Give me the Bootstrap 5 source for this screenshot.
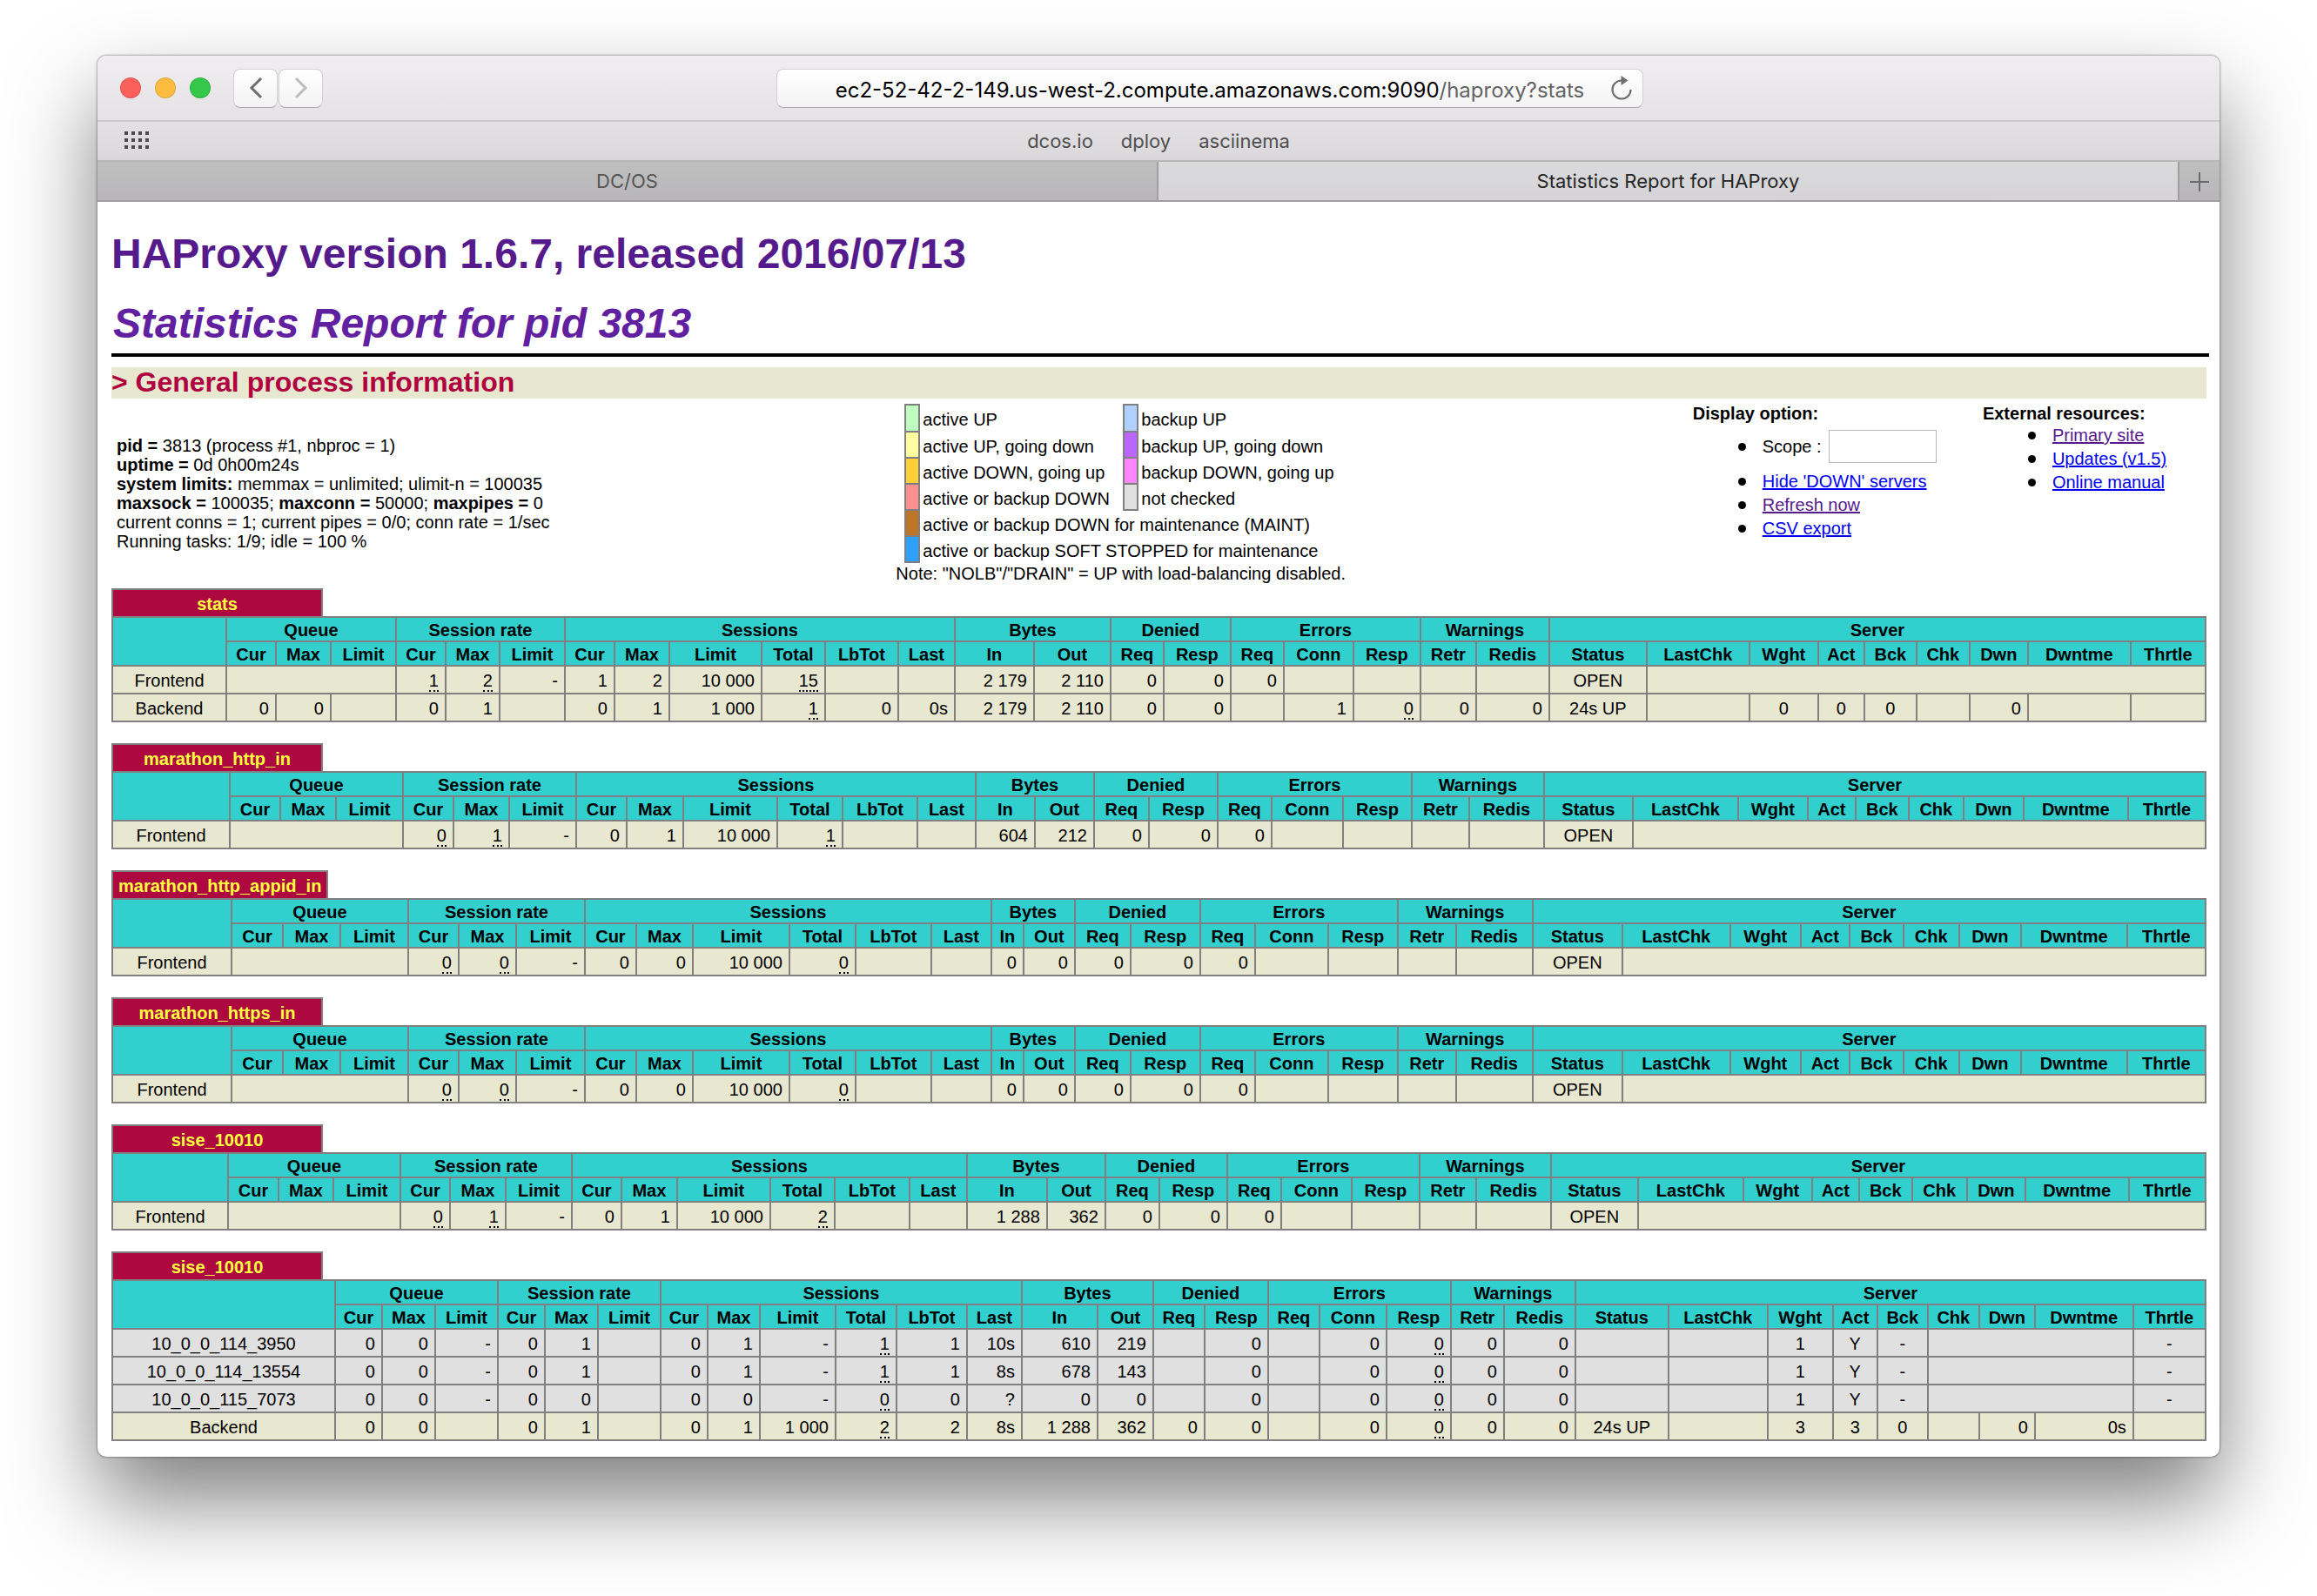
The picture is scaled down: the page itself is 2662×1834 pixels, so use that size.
<!DOCTYPE html>
<html lang="en">
<head>
<meta charset="utf-8">
<title>Statistics Report for HAProxy</title>
<meta name="viewport" content="width=device-width, initial-scale=1">
<link href="https://cdn.jsdelivr.net/npm/bootstrap@5.3.0/dist/css/bootstrap.min.css" rel="stylesheet">
<style>
body { background:#fff; color:#000; font-family:"Liberation Sans",Arial,sans-serif; font-size:20px; line-height:22px; }
.desk { padding:64px 112px 160px; }
.win { border-radius:10px; background:#fff; overflow:hidden; box-shadow:0 0 2px 1px rgba(0,0,0,.3),0 50px 100px rgba(0,0,0,.5); }
.chrome { font-family:Inter,Roboto,sans-serif; }
.toolbar { height:76px; background:linear-gradient(#f0eef0,#e4e2e4); border-bottom:2px solid #cbc9cc; }
.side { width:780px; padding-left:26px; }
.side-end { width:662px; }
.dot { width:24px; height:24px; border-radius:50%; border:1px solid rgba(0,0,0,.12); padding:0; }
.dot-r { background:#fc605b; } .dot-y { background:#fdbc40; } .dot-g { background:#34c84a; }
.navs { margin-left:26px; gap:1px; }
.navbtn { width:51px; height:45px; border:1px solid #d2d0d2; border-bottom-color:#aaa; border-radius:8px; background:linear-gradient(#fff,#f3f3f3); padding:0; }
.address { height:45px; border:1px solid #d2d0d2; border-bottom-color:#aaa; border-radius:8px; background:linear-gradient(#fff,#f3f3f3); font-size:24px; line-height:43px; padding-top:2px; color:#000; }
.address span { color:#636363; }
.reload { right:10px; top:6px; border:0; background:none; padding:0; width:28px; height:30px; line-height:0; }
.bookmarks { height:46px; background:linear-gradient(#e3e1e4,#dad8db); border-bottom:2px solid #b8b6b9; font-size:22px; padding-left:30px; }
.bookmarks a { color:#4f4f4f; text-decoration:none; }
.bookmarks div { gap:32px; padding-right:60px; }
.tabs { height:46px; font-size:22px; }
.tabs button { border:0; border-bottom:2px solid #a09ea1; padding:0; color:#555; background:linear-gradient(#bfbfbf,#b8b6b9); }
.tabs .current { background:linear-gradient(#dadadb,#d5d3d6); color:#262626; border-left:2px solid #a09ea1; border-right:2px solid #a09ea1; }
.page { padding:32px 15px 18px 16px; }
h1,h2 { font-size:48px; line-height:56px; font-weight:700; margin:0; }
h1 a { color:#551a8b; text-decoration:none; }
h1 { margin-bottom:24px; }
h2 { font-style:italic; color:#6020a0; margin-bottom:6px; padding-left:2px; }
.bar { height:4px; background:#000; margin:0 -3px 12px 0; }
h3 { font-size:32px; line-height:34px; padding-bottom:2px; font-weight:700; color:#b00040; background:#e8e8d0; margin:0; }
.info { display:grid; grid-template-columns:901fr 915fr 333fr 257fr; height:218px; }
.proc { padding:43px 6px 0; }
.legend { border-collapse:collapse; margin:6px 0 1px 10px; }
.legend td { height:30px; padding:3px 3px 0; white-space:nowrap; }
.legend tr:first-child td { height:31px; }
.legend .sw { width:16px; border:2px solid gray; padding:0; }
.legend .wide { width:235px; }
.links { padding-top:6px; }
.links ul { margin:0; padding-left:80px; line-height:27px; list-style:none; }
.links li::before { content:""; display:inline-block; width:9px; height:9px; border-radius:50%; background:#000; margin:0 19px 0 -28px; vertical-align:2px; }
.links .resources { padding-top:1px; }
.links a { color:#0000ee; } .links a.seen { color:#551a8b; }
.links input { width:124px; height:38px; border:1px solid #b9b9b9; margin-left:8px; padding:0 6px; }
.pxname { display:table; min-width:243px; height:32px; border:2px solid gray; border-bottom:0; background:#ae0840; color:#ffff40; font-weight:700; text-align:center; line-height:24px; padding:4px 6px 0; }
.tbl { width:100%; table-layout:fixed; border-collapse:collapse; margin-bottom:24px; white-space:nowrap; }
.tbl th,.tbl td { border:2px solid gray; padding:2px 7px 0; height:32px; text-align:right; }
.tbl thead th { height:28px; background:#32cfcf; text-align:center; padding:2px 0 0; }
.tbl tbody th { font-weight:400; text-align:center; }
.tbl .mid { text-align:center; }
.tbl u { text-decoration:none; border-bottom:2px dotted #000; }
.fe { background:#e8e8d0; } .srv { background:#e0e0e0; }
section:last-child .tbl { margin-bottom:0; }
</style>
<script src="https://cdn.jsdelivr.net/npm/bootstrap@5.3.0/dist/js/bootstrap.bundle.min.js"></script>
</head>
<body>
<div class="desk">
<div class="win">
<header class="chrome">
  <div class="toolbar d-flex align-items-center">
    <div class="side d-flex align-items-center flex-shrink-0">
      <div class="d-flex gap-3">
        <button class="dot dot-r" aria-label="Close"></button>
        <button class="dot dot-y" aria-label="Minimize"></button>
        <button class="dot dot-g" aria-label="Zoom"></button>
      </div>
      <div class="navs d-flex">
        <button class="navbtn" aria-label="Back"><svg width="16" height="26" viewBox="0 0 16 26" fill="none" stroke="#6e6e6e" stroke-width="3"><path d="M14 2 3 13l11 11"/></svg></button>
        <button class="navbtn" aria-label="Forward"><svg width="16" height="26" viewBox="0 0 16 26" fill="none" stroke="#bdbdbd" stroke-width="3"><path d="m2 2 11 11L2 24"/></svg></button>
      </div>
    </div>
    <div class="address flex-fill position-relative text-center">ec2-52-42-2-149.us-west-2.compute.amazonaws.com:9090<span>/haproxy?stats</span>
      <button class="reload position-absolute" aria-label="Reload"><svg width="28" height="30" viewBox="0 0 28 30"><path d="M14 6.500A10.500 10.500 0 1 0 24.500 17" fill="none" stroke="#6e6e6e" stroke-width="2.200"/><path d="M13.500 1v11l8-5.500z" fill="#6e6e6e"/></svg></button>
    </div>
    <div class="side-end flex-shrink-0"></div>
  </div>
  <nav class="bookmarks d-flex align-items-center">
    <svg width="30" height="22" fill="#4a4a4a"><g id="r"><path d="M1 0h4v4H1zM9 0h4v4H9zM17 0h4v4h-4zM25 0h4v4h-4z"/></g><use href="#r" y="8"/><use href="#r" y="16"/></svg>
    <div class="d-flex flex-fill justify-content-center"><a href="#">dcos.io</a><a href="#">dploy</a><a href="#">asciinema</a></div>
  </nav>
  <div class="tabs d-flex">
    <button style="flex:1217 1 0">DC/OS</button>
    <button class="current" style="flex:1171 1 0">Statistics Report for HAProxy</button>
    <button style="flex:0 0 46px" aria-label="New tab"><svg width="22" height="22" stroke="#6a6a6a" stroke-width="2"><path d="M11 0v22M0 11h22"/></svg></button>
  </div>
</header>
<main class="page">
  <h1><a href="#">HAProxy version 1.6.7, released 2016/07/13</a></h1>
  <h2>Statistics Report for pid 3813</h2>
  <div class="bar"></div>
  <h3>&gt; General process information</h3>
  <div class="info">
    <div class="proc">
      <b>pid = </b>3813 (process #1, nbproc = 1)<br>
      <b>uptime = </b>0d 0h00m24s<br>
      <b>system limits:</b> memmax = unlimited; ulimit-n = 100035<br>
      <b>maxsock = </b>100035; <b>maxconn = </b>50000; <b>maxpipes = </b>0<br>
      current conns = 1; current pipes = 0/0; conn rate = 1/sec<br>
      Running tasks: 1/9; idle = 100 %
    </div>
    <div>
      <table class="legend">
        <tr><td class="sw" bgcolor="#c0ffc0"></td><td>active UP</td><td class="sw" bgcolor="#b0d0ff"></td><td>backup UP</td></tr>
        <tr><td class="sw" bgcolor="#ffffa0"></td><td>active UP, going down</td><td class="sw" bgcolor="#bb66ff"></td><td>backup UP, going down</td></tr>
        <tr><td class="sw" bgcolor="#ffcf3a"></td><td>active DOWN, going up</td><td class="sw" bgcolor="#ff85ff"></td><td>backup DOWN, going up</td></tr>
        <tr><td class="sw" bgcolor="#ff9090"></td><td class="wide">active or backup DOWN</td><td class="sw" bgcolor="#e0e0e0"></td><td>not checked</td></tr>
        <tr><td class="sw" bgcolor="#bd7528"></td><td colspan="3">active or backup DOWN for maintenance (MAINT)</td></tr>
        <tr><td class="sw" bgcolor="#2d9fff"></td><td colspan="3">active or backup SOFT STOPPED for maintenance</td></tr>
      </table>
      <div>Note: "NOLB"/"DRAIN" = UP with load-balancing disabled.</div>
    </div>
    <div class="links">
      <b>Display option:</b>
      <ul>
        <li class="py-1 my-1"><label for="scope">Scope :</label><input id="scope" type="text"></li>
        <li><a href="#">Hide 'DOWN' servers</a></li>
        <li><a href="#" class="seen">Refresh now</a></li>
        <li><a href="#">CSV export</a></li>
      </ul>
    </div>
    <div class="links">
      <b>External resources:</b>
      <ul class="resources">
        <li><a href="#" class="seen">Primary site</a></li>
        <li><a href="#">Updates (v1.5)</a></li>
        <li><a href="#">Online manual</a></li>
      </ul>
    </div>
  </div>
  <div id="proxies"></div>
</main>
</div>
</div>
<script>
// Column groups, shared by every proxy table.
const groups = [['Queue','Cur Max Limit'],['Session rate','Cur Max Limit'],['Sessions','Cur Max Limit Total LbTot Last'],['Bytes','In Out'],['Denied','Req Resp'],['Errors','Req Conn Resp'],['Warnings','Retr Redis'],['Server','Status LastChk Wght Act Bck Chk Dwn Dwntme Thrtle']];
// Column edges of each table. In a row "|" parts cells, "_" marks a detail tip, "=" centres, "*n" spans n columns.
const w1 = [129,260,317,380,455,512,574,649,706,769,875,948,1032,1097,1188,1276,1337,1414,1475,1555,1632,1696,1780,1892,2010,2089,2142,2202,2263,2330,2448,2534];
const w2 = [129,264,322,386,463,521,585,662,720,785,893,968,1054,1121,1189,1257,1320,1399,1461,1543,1622,1688,1774,1876,1997,2077,2132,2193,2256,2325,2445,2534];
const w3 = [129,266,325,391,469,527,593,672,731,796,907,983,1070,1139,1176,1235,1299,1379,1442,1526,1606,1673,1761,1864,1988,2069,2125,2187,2251,2322,2444,2534];
const w5 = [129,262,320,383,460,517,581,657,714,778,885,959,1045,1111,1203,1270,1332,1410,1472,1553,1631,1696,1782,1882,2003,2082,2136,2197,2260,2327,2446,2534];
const w6 = [129,385,439,500,572,626,687,759,813,873,960,1030,1111,1174,1261,1325,1384,1457,1516,1593,1667,1728,1810,1917,2031,2106,2157,2215,2274,2338,2451,2534];
const proxies = [
 ['stats', w1, ['Frontend|*3|_1|_2|-|1|2|10 000|_15|||2 179|2 110|0|0|0|||||=OPEN|*8', 'Backend|0|0||0|1||0|1|1 000|_1|0|0s|2 179|2 110|0|0||1|_0|0|0|=24s UP||=0|=0|=0||0||']],
 ['marathon_http_in', w2, ['Frontend|*3|_0|_1|-|0|1|10 000|_1|||604|212|0|0|0|||||=OPEN|*8']],
 ['marathon_http_appid_in', w3, ['Frontend|*3|_0|_0|-|0|0|10 000|_0|||0|0|0|0|0|||||=OPEN|*8']],
 ['marathon_https_in', w3, ['Frontend|*3|_0|_0|-|0|0|10 000|_0|||0|0|0|0|0|||||=OPEN|*8']],
 ['sise_10010', w5, ['Frontend|*3|_0|_1|-|0|1|10 000|_2|||1 288|362|0|0|0|||||=OPEN|*8']],
 ['sise_10010', w6, ['10_0_0_114_3950|0|0|-|0|1||0|1|-|_1|1|10s|610|219||0||0|_0|0|0|||=1|=Y|=-|*3|=-',
   '10_0_0_114_13554|0|0|-|0|1||0|1|-|_1|1|8s|678|143||0||0|_0|0|0|||=1|=Y|=-|*3|=-',
   '10_0_0_115_7073|0|0|-|0|0||0|0|-|_0|0|?|0|0||0||0|_0|0|0|||=1|=Y|=-|*3|=-',
   'Backend|0|0||0|1||0|1|1 000|_2|2|8s|1 288|362|0|0||0|_0|0|0|=24s UP||=3|=3|=0||0|0s|']]
];
const head = '<thead><tr><th rowspan="2"></th>' + groups.map(g => `<th colspan="${g[1].split(' ').length}">${g[0]}</th>`).join('') + '</tr><tr>' + groups.map(g => g[1].split(' ').map(c => `<th>${c}</th>`).join('')).join('') + '</tr></thead>';
const cell = c => c[0] === '*' ? `<td colspan="${c.slice(1)}"></td>` : c[0] === '_' ? `<td><u>${c.slice(1)}</u></td>` : c[0] === '=' ? `<td class="mid">${c.slice(1)}</td>` : `<td>${c}</td>`;
document.getElementById('proxies').innerHTML = proxies.map(([name, edges, rows]) => {
  const total = edges[31] - edges[0];
  const cols = edges.slice(1).map((e, i) => `<col style="width:${((e - edges[i]) / total * 100).toFixed(3)}%">`).join('');
  const body = rows.map(r => { const [n, ...c] = r.split('|'); return `<tr class="${/end$/.test(n) ? 'fe' : 'srv'}"><th scope="row">${n}</th>${c.map(cell).join('')}</tr>`; }).join('');
  return `<section><div class="pxname">${name}</div><table class="tbl"><colgroup>${cols}</colgroup>${head}<tbody>${body}</tbody></table></section>`;
}).join('');
</script>
</body>
</html>
